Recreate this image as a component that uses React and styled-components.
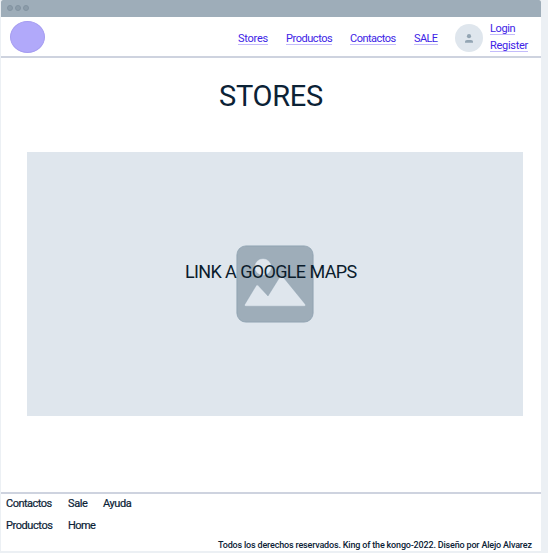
import React from "react";
import styled, { createGlobalStyle } from "styled-components";

const GlobalStyle = createGlobalStyle`
  * { box-sizing: border-box; }
  body {
    margin: 0;
    overflow: hidden;
    background: #edf1f5;
    font-family: Roboto, "Liberation Sans", sans-serif;
    color: #0b2236;
  }
`;

const Page = styled.div`
  display: flex;
  height: 553px;
  padding: 0 7px 2px 1px;
  background: #ecf0f4;
`;

const Browser = styled.div`
  display: flex;
  flex-direction: column;
  width: 540px;
  height: 551px;
  background: #fff;
`;

const TitleBar = styled.div`
  display: flex;
  flex: none;
  gap: 2px;
  height: 17px;
  padding: 5px 0 0 6px;
  background: #9eadb9;
  border-radius: 2px 2px 0 0;
`;

const WindowDot = styled.span`
  width: 6px;
  height: 6px;
  border: 1px solid #8293a1;
  border-radius: 50%;
  background: #8c9ca9;
`;

const Header = styled.header`
  display: flex;
  flex: none;
  height: 41px;
  padding: 4px 0 0 9px;
  border-bottom: 2px solid #ced3df;
`;

const Logo = styled.div`
  width: 35px;
  height: 32px;
  border: 1px solid #a69df0;
  border-radius: 50%;
  background: #b1a9fa;
`;

const Nav = styled.nav`
  display: flex;
  gap: 18px;
  margin: 10px 0 0 193px;
`;

const Link = styled.a`
  width: ${(p) => p.$width}px;
  height: 14px;
  border-bottom: 1px solid #c3bbfb;
  color: #3d22e6;
  font-size: 11px;
  line-height: 16px;
  letter-spacing: ${(p) => p.$tracking}px;
  white-space: nowrap;
`;

const Avatar = styled.div`
  display: flex;
  align-items: center;
  justify-content: center;
  width: 28px;
  height: 28px;
  margin: 3px 0 0 17px;
  border-radius: 50%;
  background: #dfe6ed;
`;

const Account = styled.div`
  display: flex;
  flex-direction: column;
  gap: 3px;
  margin-left: 7px;
`;

const Main = styled.main`
  display: flex;
  flex: 1;
  flex-direction: column;
`;

const Title = styled.h1`
  height: 40px;
  margin: 18px 0 36px 218px;
  font-size: 29px;
  font-weight: 400;
  line-height: 40px;
  letter-spacing: -0.3px;
`;

const MapPlaceholder = styled.section`
  display: grid;
  width: 496px;
  height: 264px;
  margin-left: 26px;
  background: #dfe6ed;
`;

const Picture = styled.svg`
  grid-area: 1 / 1;
  width: 78px;
  height: 78px;
  margin: 93px 0 0 209px;
`;

const MapLabel = styled.span`
  grid-area: 1 / 1;
  margin: 108px 0 0 158px;
  color: #0b1c2c;
  font-size: 18px;
  line-height: 24px;
  letter-spacing: -0.68px;
  word-spacing: 0.3px;
  white-space: nowrap;
`;

const Footer = styled.footer`
  display: flex;
  flex: none;
  flex-direction: column;
  height: 59px;
  border-top: 2px solid #ced3df;
`;

const FooterLinks = styled.div`
  display: grid;
  grid-template-columns: 62px 35px 40px;
  grid-auto-rows: 22px;
  padding-left: 5px;
`;

const FooterLink = styled.a`
  font-size: 11px;
  line-height: 20px;
  -webkit-text-stroke: 0.2px #0b2236;
  letter-spacing: ${(p) => p.$tracking}px;
  white-space: nowrap;
`;

const Copyright = styled.p`
  width: 315px;
  height: 13px;
  margin: 0 0 0 217px;
  font-size: 9px;
  font-weight: 500;
  line-height: 14px;
  letter-spacing: -0.175px;
  white-space: nowrap;
`;

const links = [
  { label: "Stores", width: 30, tracking: -0.25 },
  { label: "Productos", width: 46, tracking: -0.45 },
  { label: "Contactos", width: 46, tracking: -0.52 },
  { label: "SALE", width: 24, tracking: -0.6 },
];

const footerLinks = [
  { label: "Contactos", tracking: -0.52 },
  { label: "Sale", tracking: -0.4 },
  { label: "Ayuda", tracking: -0.4 },
  { label: "Productos", tracking: -0.42 },
  { label: "Home", tracking: -0.6 },
];

export default function App() {
  return (
    <Page>
      <GlobalStyle />
      <Browser>
        <TitleBar>
          <WindowDot />
          <WindowDot />
          <WindowDot />
        </TitleBar>
        <Header>
          <Logo />
          <Nav>
            {links.map((l) => (
              <Link key={l.label} $width={l.width} $tracking={l.tracking}>{l.label}</Link>
            ))}
          </Nav>
          <Avatar>
            <svg width="8" height="9" viewBox="0 0 8 9" fill="#93a5b3">
              <circle cx="4" cy="2.2" r="2.1" />
              <path d="M0 8.800V7.400C0 6.300 1.500 6 4 6S8 6.300 8 7.400V8.800Z" />
            </svg>
          </Avatar>
          <Account>
            <Link $width={25} $tracking={-0.4}>Login</Link>
            <Link $width={38} $tracking={-0.3}>Register</Link>
          </Account>
        </Header>
        <Main>
          <Title>STORES</Title>
          <MapPlaceholder>
            <Picture viewBox="0 0 78 78">
              <rect x="0.9" y="0.9" width="76.2" height="76.2" rx="9" fill="#9eadb9" stroke="#8c9fae" strokeWidth="0.8" />
              <g fill="#dfe6ed" stroke="#8c9fae" strokeWidth="0.4" strokeLinejoin="round">
                <circle cx="27" cy="22" r="8.5" />
                <path d="M9.500 61.200 Q8 61 8.700 59.500 L20.200 40.500 Q21 39.300 22 40.300 L32 51 L43.500 32.500 Q45.500 30 47.500 32.500 L69.300 59.300 Q70 61 68.500 61.200 Z" />
              </g>
            </Picture>
            <MapLabel>LINK A GOOGLE MAPS</MapLabel>
          </MapPlaceholder>
        </Main>
        <Footer>
          <FooterLinks>
            {footerLinks.map((l) => (
              <FooterLink key={l.label} $tracking={l.tracking}>{l.label}</FooterLink>
            ))}
          </FooterLinks>
          <Copyright>Todos los derechos reservados. King of the kongo-2022. Diseño por Alejo Alvarez</Copyright>
        </Footer>
      </Browser>
    </Page>
  );
}
